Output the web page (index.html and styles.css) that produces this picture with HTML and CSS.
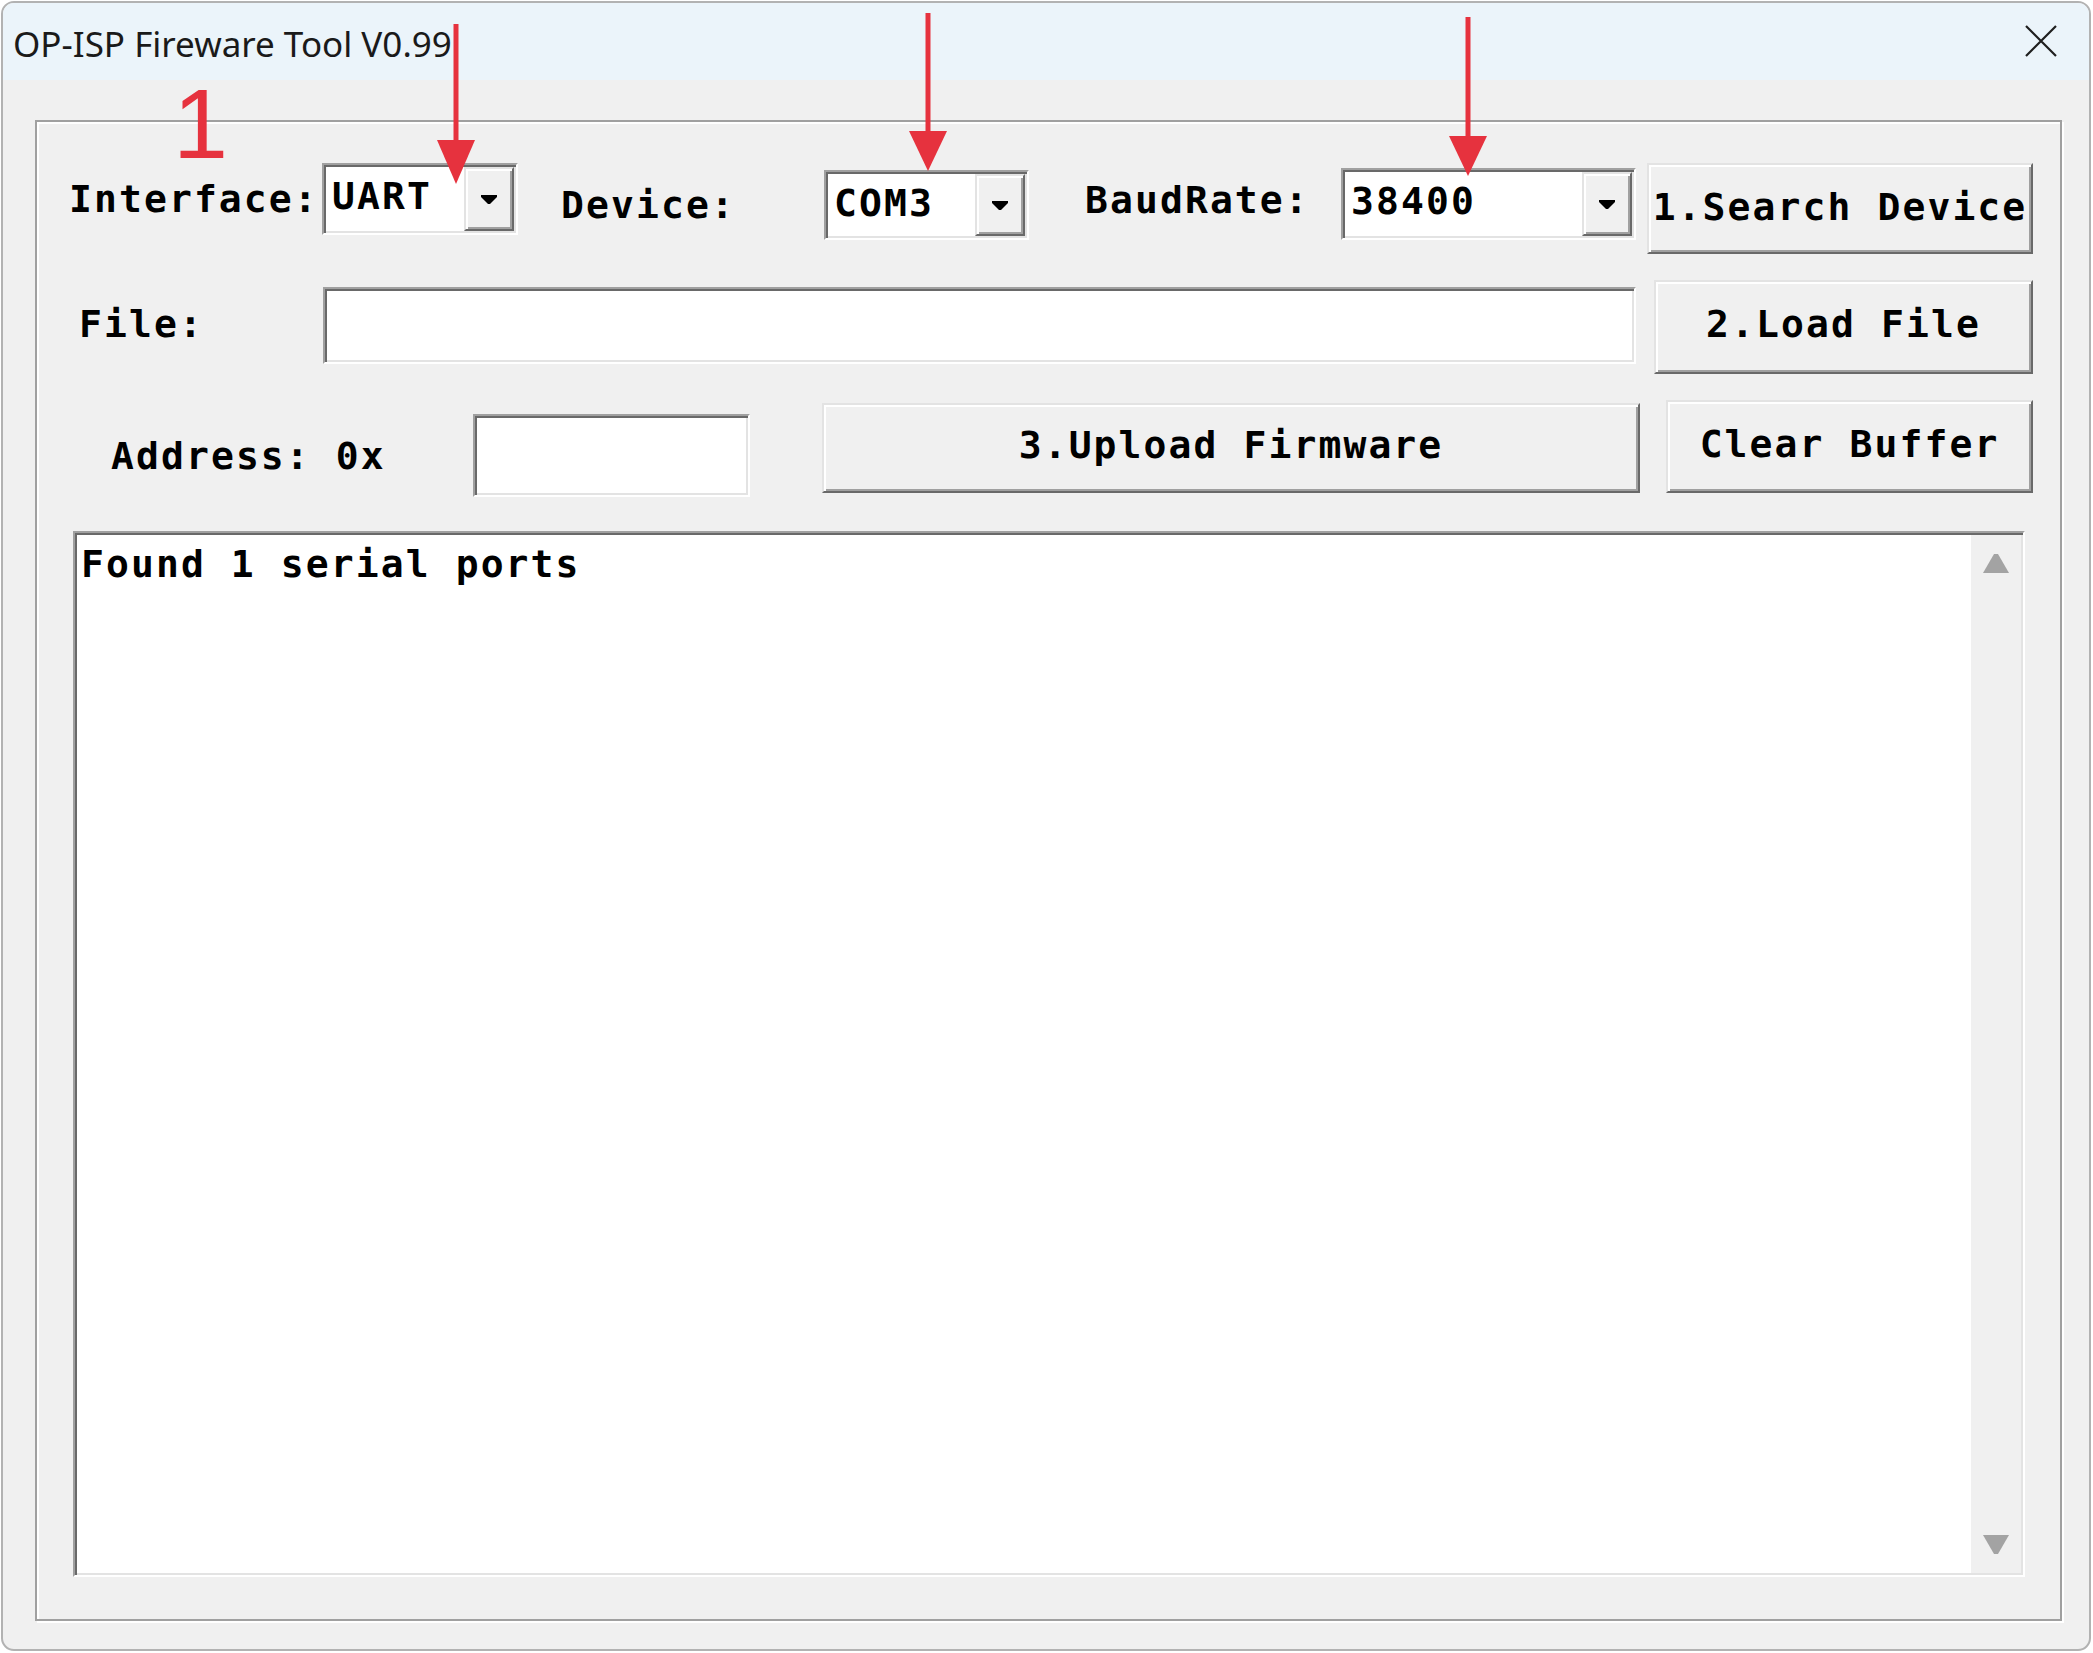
FILE: index.html
```html
<!DOCTYPE html>
<html>
<head>
<meta charset="utf-8">
<title>OP-ISP Fireware Tool V0.99</title>
<link rel="stylesheet" href="styles.css">
</head>
<body>
<div class="window">
  <div class="titlebar">
    <span class="title">OP-ISP Fireware Tool V0.99</span>
    <svg class="close" width="32" height="32" viewBox="0 0 32 32"><path d="M1 1L31 31M31 1L1 31" stroke="#1f1f1f" stroke-width="2.2" fill="none"/></svg>
  </div>
  <div class="client">
    <div class="group">
      <div class="row row1">
        <span class="lbl l-iface">Interface:</span>
        <div class="combo sunken c-uart"><span class="combo-text">UART</span><span class="dd raised"><svg width="16" height="9" viewBox="0 0 16 9"><polygon points="0,0 16,0 16,2 9,9 7,9 0,2" fill="#000"/></svg></span></div>
        <span class="lbl l-dev">Device:</span>
        <div class="combo sunken c-com"><span class="combo-text">COM3</span><span class="dd raised"><svg width="16" height="9" viewBox="0 0 16 9"><polygon points="0,0 16,0 16,2 9,9 7,9 0,2" fill="#000"/></svg></span></div>
        <span class="lbl l-baud">BaudRate:</span>
        <div class="combo sunken c-baud"><span class="combo-text">38400</span><span class="dd raised"><svg width="16" height="9" viewBox="0 0 16 9"><polygon points="0,0 16,0 16,2 9,9 7,9 0,2" fill="#000"/></svg></span></div>
        <div class="btn raised b-search">1.Search Device</div>
      </div>
      <div class="row row2">
        <span class="lbl l-file">File:</span>
        <div class="sunken i-file"></div>
        <div class="btn raised b-load">2.Load File</div>
      </div>
      <div class="row row3">
        <span class="lbl l-addr">Address: 0x</span>
        <div class="sunken i-addr"></div>
        <div class="btn raised b-upload">3.Upload Firmware</div>
        <div class="btn raised b-clear">Clear Buffer</div>
      </div>
      <div class="log sunken">
        <div class="log-text">Found 1 serial ports</div>
        <div class="scrollbar">
          <div class="sb-btn"><svg width="26" height="20" viewBox="0 0 26 20"><polygon points="11,0 15,0 26,19 0,19" fill="#a3a3a3"/></svg></div>
          <div class="sb-btn"><svg width="26" height="20" viewBox="0 0 26 20"><polygon points="0,1 26,1 15,20 11,20" fill="#a3a3a3"/></svg></div>
        </div>
      </div>
    </div>
  </div>
</div>
<svg class="arrows" width="2093" height="1653" viewBox="0 0 2093 1653">
  <line x1="456" y1="24" x2="456" y2="146" stroke="#e6323e" stroke-width="5"/>
  <polygon points="437,140 475,140 456,184" fill="#e6323e"/>
  <line x1="928" y1="13" x2="928" y2="136" stroke="#e6323e" stroke-width="5"/>
  <polygon points="909,131 947,131 928,171" fill="#e6323e"/>
  <line x1="1468" y1="17" x2="1468" y2="141" stroke="#e6323e" stroke-width="5"/>
  <polygon points="1449,136 1487,136 1468,176" fill="#e6323e"/>
</svg>
<span class="mark">1</span>
</body>
</html>
```
FILE: styles.css
```css
html, body {
  margin: 0;
  padding: 0;
  background: #ffffff;
}
body {
  width: 2093px;
  height: 1653px;
  position: relative;
  overflow: hidden;
}
.window {
  margin: 1px 0 0 1px;
  width: 2090px;
  height: 1650px;
  box-sizing: border-box;
  border: 2px solid #b2b2b2;
  border-radius: 13px;
  overflow: hidden;
  background: #f0f0f0;
  display: flex;
  flex-direction: column;
}
.titlebar {
  height: 77px;
  flex: none;
  box-sizing: border-box;
  background: #ebf4fa;
  display: flex;
  align-items: center;
  justify-content: space-between;
  padding: 4px 32px 0 10px;
}
.title {
  font-family: "Noto Sans", "Open Sans", sans-serif;
  font-size: 35px;
  line-height: 44px;
  color: #1a1a1a;
  white-space: nowrap;
}
.close {
  display: block;
  margin-top: -6px;
}
.client {
  flex: 1;
  display: flex;
  padding: 40px 27px 28px 32px;
  min-height: 0;
}
.group {
  flex: 1;
  border: 2px solid #a0a0a0;
  box-shadow: inset 2px 2px 0 #ffffff, 2px 2px 0 #ffffff;
  padding-top: 41px;
  display: flex;
  flex-direction: column;
}
.row {
  display: flex;
  align-items: flex-start;
  flex: none;
}
.row1 { height: 91px; }
.row2 { height: 94px; margin-top: 26px; }
.row3 { height: 97px; margin-top: 26px; }

.lbl, .btn, .combo-text, .log-text {
  font-family: "DejaVu Sans Mono", monospace;
  font-weight: bold;
  font-size: 38px;
  line-height: 38px;
  letter-spacing: 2.1px;
  color: #000;
  white-space: nowrap;
}
.lbl { flex: none; display: block; }

.sunken {
  box-sizing: border-box;
  background: #ffffff;
  border: 2px solid;
  border-color: #a0a0a0 #ffffff #ffffff #a0a0a0;
  box-shadow: inset 2px 2px 0 #696969, inset -2px -2px 0 #e3e3e3;
  flex: none;
}
.raised {
  box-sizing: border-box;
  background: #f0f0f0;
  border: 2px solid;
  border-color: #e3e3e3 #696969 #696969 #e3e3e3;
  box-shadow: inset 2px 2px 0 #ffffff, inset -2px -2px 0 #a0a0a0;
}
.combo {
  display: flex;
  padding: 2px;
}
.combo-text {
  flex: 1;
  padding: 10px 0 0 6px;
}
.dd {
  width: 50px;
  flex: none;
  display: flex;
  align-items: center;
  justify-content: center;
}
.btn {
  flex: none;
  display: flex;
  align-items: center;
  justify-content: center;
  padding-bottom: 6px;
}

/* row 1 */
.l-iface { margin: 17px 0 0 32px; width: 253px; }
.c-uart { width: 196px; height: 72px; }
.l-dev { margin: 23px 0 0 43px; width: 263px; }
.c-com { width: 205px; height: 70px; margin-top: 7px; }
.l-baud { margin: 18px 0 0 56px; width: 256px; }
.c-baud { width: 295px; height: 72px; margin-top: 5px; }
.b-search { margin-left: 11px; width: 386px; height: 91px; padding-bottom: 4px; }

/* row 2 */
.l-file { margin: 25px 0 0 42px; width: 244px; }
.i-file { width: 1313px; height: 77px; margin-top: 7px; }
.b-load { margin-left: 18px; width: 379px; height: 94px; }

/* row 3 */
.l-addr { margin: 37px 0 0 74px; width: 362px; }
.i-addr { width: 277px; height: 83px; margin-top: 14px; }
.b-upload { margin: 3px 0 0 72px; width: 818px; height: 90px; }
.b-clear { margin-left: 26px; width: 367px; height: 93px; }

/* log */
.log {
  margin: 34px 0 0 36px;
  width: 1952px;
  height: 1046px;
  padding: 2px;
  display: flex;
}
.log-text {
  flex: 1;
  padding: 10px 0 0 4px;
}
.scrollbar {
  width: 50px;
  flex: none;
  background: #f0f0f0;
  display: flex;
  flex-direction: column;
  justify-content: space-between;
}
.sb-btn {
  height: 58px;
  display: flex;
  align-items: center;
  justify-content: center;
}
.sb-btn svg { display: block; }

/* annotations */
.arrows {
  position: absolute;
  left: 0;
  top: 0;
  pointer-events: none;
}
.mark {
  position: absolute;
  left: 173px;
  top: 88px;
  font-family: "Liberation Sans", Arial, sans-serif;
  font-weight: 400;
  font-size: 99px;
  line-height: 72px;
  color: #e6323e;
}
```
